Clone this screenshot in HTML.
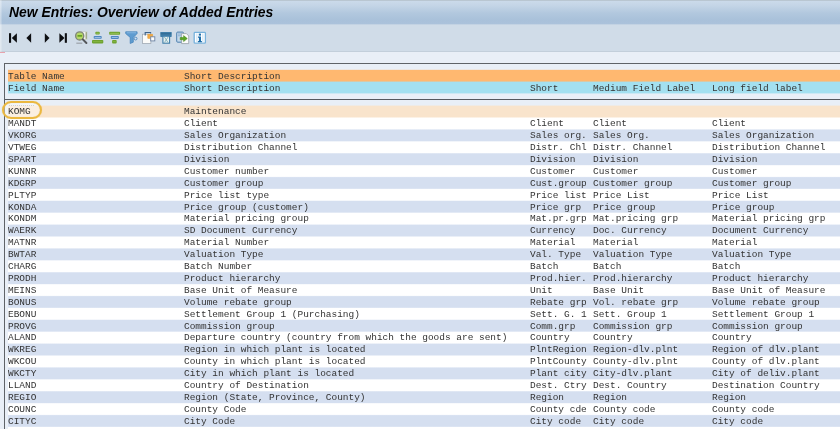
<!DOCTYPE html>
<html><head><meta charset="utf-8"><title>New Entries: Overview of Added Entries</title>
<style>
html,body{margin:0;padding:0;}
body{width:840px;height:429px;overflow:hidden;background:#e9eff7;position:relative;font-family:"Liberation Mono",monospace;}
#title{position:absolute;left:0;top:0;width:840px;height:25px;background:linear-gradient(#b9c6d1 0px,#b9c6d1 1px,#cbdaea 1px,#c3d4e6 6px,#b2c8de 13px,#a9c1da 20px,#abc2db 23.5px,#cfdbe7 25px);}
#title .t{position:absolute;left:9px;top:4px;font:italic bold 13.9px/16px "Liberation Sans",sans-serif;color:#000;white-space:nowrap;will-change:transform;}
#tb{position:absolute;left:0;top:25px;width:840px;height:27px;background:#d0dce8;border-bottom:1px solid #c3cfdb;box-sizing:border-box;}
#panel{position:absolute;left:4px;top:63px;width:900px;height:400px;border:1px solid #5f6368;background:#e9eff7;box-sizing:border-box;will-change:transform;}
.r{position:absolute;left:3px;width:900px;white-space:pre;font-size:9.46px;color:#333333;}
.c{position:absolute;top:0;}
#hl{position:absolute;left:-3px;top:37.1px;width:40px;height:18.3px;box-sizing:border-box;border:2.1px solid #ebb840;border-radius:9.2px;background:rgba(255,255,255,0.42);box-shadow:0 0 0.7px #ebb840, inset 0 0 0.7px #ebb840;}
#dots{position:absolute;left:3.6px;top:40.6px;width:25.5px;height:1px;background:repeating-linear-gradient(to right,#9fa09a 0,#9fa09a 1px,rgba(0,0,0,0) 1px,rgba(0,0,0,0) 2px);opacity:.4}
.div{position:absolute;left:0;width:900px;height:1px;background:#55595f;}
</style></head><body>
<div id="title"><div class="t">New Entries: Overview of Added Entries</div></div>
<div id="tb"></div>
<div style="position:absolute;left:0;top:0;width:2px;height:52px;background:linear-gradient(to right,rgba(255,255,255,.45),rgba(255,255,255,.1))"></div><div style="position:absolute;left:0;top:52px;width:4.5px;height:1px;background:#e8a3ad"></div>
<svg id="ico" width="220" height="28" viewBox="0 24 220 28" style="position:absolute;left:0;top:24px">
<!-- first -->
<rect x="9" y="33.2" width="2.1" height="9.6" fill="#0d0f12"/>
<path d="M11.8 38 L16.9 33.2 L16.9 42.8 Z" fill="#0d0f12"/>
<!-- prev -->
<path d="M26.4 38 L31.1 33.2 L31.1 42.8 Z" fill="#0d0f12"/>
<!-- next -->
<path d="M49.5 38 L44.8 33.2 L44.8 42.8 Z" fill="#0d0f12"/>
<!-- last -->
<path d="M64.5 38 L59.4 33.2 L59.4 42.8 Z" fill="#0d0f12"/>
<rect x="64.8" y="33.2" width="2.1" height="9.6" fill="#0d0f12"/>
<!-- find -->
<rect x="82" y="31.8" width="5" height="7.6" fill="#f4f5f1" stroke="#c2c8bd" stroke-width="0.6"/>
<rect x="85.6" y="32.1" width="1.2" height="6.8" fill="#8f9b73"/>
<circle cx="79.7" cy="35.9" r="4.05" fill="#b5d768" stroke="#81867c" stroke-width="1.4"/>
<rect x="77.5" y="35" width="4.6" height="1.7" fill="#66a024"/>
<path d="M82.8 39.4 L86.4 43" stroke="#54575a" stroke-width="2" stroke-linecap="round"/>
<rect x="76.3" y="42.7" width="6" height="0.9" fill="#8a8f94"/>
<!-- sort asc -->
<rect x="95.4" y="31.8" width="4.3" height="2.7" rx="0.8" fill="#6da22f"/>
<rect x="96.2" y="32.8" width="2.7" height="0.7" fill="#a5cc62"/>
<rect x="93.7" y="35.9" width="8" height="2.9" rx="0.8" fill="#4c86c1"/>
<rect x="94.7" y="37" width="6" height="0.7" fill="#b8d3ee"/>
<rect x="92" y="40.1" width="11.3" height="3.3" rx="0.8" fill="#6da22f"/>
<rect x="93" y="41.4" width="9.3" height="0.7" fill="#8fbd4a"/>
<!-- sort desc -->
<rect x="109.2" y="31.8" width="10.9" height="2.9" rx="0.8" fill="#6da22f"/>
<rect x="110.2" y="32.9" width="8.9" height="0.7" fill="#a5cc62"/>
<rect x="110.8" y="36" width="8" height="2.9" rx="0.8" fill="#4c86c1"/>
<rect x="111.8" y="37.1" width="6" height="0.7" fill="#b8d3ee"/>
<rect x="112.1" y="40.1" width="4.6" height="3.3" rx="0.9" fill="#6da22f"/>
<rect x="113" y="41.4" width="2.8" height="0.7" fill="#8fbd4a"/>
<!-- filter -->
<path d="M125.7 31.8 H137.1 V33.6 L133.3 37.4 V42.2 L130.2 43.5 V37.4 L125.7 33.6 Z" fill="#5f9cd0" stroke="#3f7fb8" stroke-width="0.7" stroke-linejoin="round"/>
<rect x="126.6" y="32.4" width="9.6" height="0.8" fill="#8dbde6"/>
<circle cx="135.6" cy="38.6" r="1.4" fill="#d6e3ef" stroke="#4b86bd" stroke-width="0.9"/>
<!-- copy/choose layout -->
<rect x="142.6" y="34.2" width="8.3" height="9.2" fill="#fbfbf9" stroke="#9aa3ad" stroke-width="0.7"/>
<path d="M145.2 35.6 V32.5 H150.6 V33.6" fill="none" stroke="#3d6288" stroke-width="1.1"/>
<rect x="147.8" y="34.2" width="4.9" height="4.2" fill="#f3ab45" stroke="#e39a33" stroke-width="0.5"/>
<rect x="150.7" y="36.8" width="4.1" height="4.1" fill="#fdfdfd" stroke="#6d83a3" stroke-width="0.9"/>
<!-- layout/print -->
<rect x="160.3" y="31.9" width="11.4" height="5" rx="0.6" fill="#3f7ea9"/>
<rect x="160.8" y="33.3" width="10.4" height="1" fill="#2f6890"/>
<rect x="162.9" y="36.2" width="6.7" height="7" fill="#e8f0f2" stroke="#3f7ea9" stroke-width="1.1"/>
<path d="M164.4 37 L168.1 42.6 M168.1 37 L164.4 42.6" stroke="#7fb0b8" stroke-width="0.9" fill="none"/>
<!-- export -->
<rect x="176.7" y="32.1" width="6.8" height="10.1" rx="1" fill="#c4d8ea" stroke="#4c7fae" stroke-width="1"/>
<rect x="178" y="33.6" width="4" height="0.8" fill="#7ea6cc"/>
<rect x="178" y="35.4" width="3" height="0.8" fill="#7ea6cc"/>
<path d="M181.6 33.6 H186.4 L188.7 35.9 V43.6 H181.6 Z" fill="#fbfbfb" stroke="#8d959e" stroke-width="0.7"/>
<path d="M180.2 37.5 H183.6 V35.6 L187.3 38.6 L183.6 41.6 V39.7 H180.2 Z" fill="#5aa526" stroke="#3e8414" stroke-width="0.5"/>
<!-- info -->
<rect x="194.2" y="32.4" width="11.2" height="10.8" rx="0.8" fill="#fdfeff" stroke="#78b2dc" stroke-width="1.3"/>
<rect x="196" y="33.6" width="1.6" height="8.6" fill="#dcecf8"/>
<rect x="202" y="33.6" width="1.6" height="8.6" fill="#dcecf8"/>
<rect x="198.8" y="33.6" width="2.2" height="2" fill="#1f6ea9"/>
<path d="M198 36.6 H201 V41 H201.9 V42.2 H197.9 V41 H198.9 V37.7 H198 Z" fill="#1f6ea9"/>
</svg>
<div id="panel">
<div id="bands" style="position:absolute;left:3px;top:0;width:900px;height:400px;background:linear-gradient(to bottom,#e9eff7 0px,#e9eff7 5.30px,#ffb870 6.50px,#ffb870 17.00px,#a3e0f0 18.20px,#a3e0f0 28.80px,#e9eff7 30.00px,#e9eff7 41.00px,#f9e4cc 42.20px,#f9e4cc 52.90px,#ffffff 54.10px,#ffffff 64.80px,#d5dff0 66.00px,#d5dff0 76.70px,#ffffff 77.90px,#ffffff 88.60px,#d5dff0 89.80px,#d5dff0 100.50px,#ffffff 101.70px,#ffffff 112.40px,#d5dff0 113.60px,#d5dff0 124.30px,#ffffff 125.50px,#ffffff 136.20px,#d5dff0 137.40px,#d5dff0 148.10px,#ffffff 149.30px,#ffffff 160.00px,#d5dff0 161.20px,#d5dff0 171.90px,#ffffff 173.10px,#ffffff 183.80px,#d5dff0 185.00px,#d5dff0 195.70px,#ffffff 196.90px,#ffffff 207.60px,#d5dff0 208.80px,#d5dff0 219.50px,#ffffff 220.70px,#ffffff 231.40px,#d5dff0 232.60px,#d5dff0 243.30px,#ffffff 244.50px,#ffffff 255.20px,#d5dff0 256.40px,#d5dff0 267.10px,#ffffff 268.30px,#ffffff 279.00px,#d5dff0 280.20px,#d5dff0 290.90px,#ffffff 292.10px,#ffffff 302.80px,#d5dff0 304.00px,#d5dff0 314.70px,#ffffff 315.90px,#ffffff 326.60px,#d5dff0 327.80px,#d5dff0 338.50px,#ffffff 339.70px,#ffffff 350.40px,#d5dff0 351.60px,#d5dff0 362.30px,#ffffff 363.50px,#ffffff 374.20px,#d5dff0 375.40px,#d5dff0 386.10px,#ffffff 387.30px,#ffffff 398.00px,#d5dff0 399.20px)"></div>
<div id="hl"></div><div id="dots"></div>
<div class="r" style="top:7px;height:11px;line-height:11px;"><span class="c" style="left:0px">Table Name</span><span class="c" style="left:176px">Short Description</span></div>
<div class="r" style="top:19px;height:11px;line-height:11px;"><span class="c" style="left:0px">Field Name</span><span class="c" style="left:176px">Short Description</span><span class="c" style="left:522px">Short</span><span class="c" style="left:585px">Medium Field Label</span><span class="c" style="left:704px">Long field label</span></div>
<div class="div" style="top:35px"></div>
<div class="r" style="top:42px;height:11px;line-height:11px;"><span class="c" style="left:0px">KOMG</span><span class="c" style="left:176px">Maintenance</span></div>
<div class="r" style="top:54px;height:11px;line-height:11px;"><span class="c" style="left:0px">MANDT</span><span class="c" style="left:176px">Client</span><span class="c" style="left:522px">Client</span><span class="c" style="left:585px">Client</span><span class="c" style="left:704px">Client</span></div>
<div class="r" style="top:66px;height:11px;line-height:11px;"><span class="c" style="left:0px">VKORG</span><span class="c" style="left:176px">Sales Organization</span><span class="c" style="left:522px">Sales org.</span><span class="c" style="left:585px">Sales Org.</span><span class="c" style="left:704px">Sales Organization</span></div>
<div class="r" style="top:78px;height:11px;line-height:11px;"><span class="c" style="left:0px">VTWEG</span><span class="c" style="left:176px">Distribution Channel</span><span class="c" style="left:522px">Distr. Chl</span><span class="c" style="left:585px">Distr. Channel</span><span class="c" style="left:704px">Distribution Channel</span></div>
<div class="r" style="top:90px;height:11px;line-height:11px;"><span class="c" style="left:0px">SPART</span><span class="c" style="left:176px">Division</span><span class="c" style="left:522px">Division</span><span class="c" style="left:585px">Division</span><span class="c" style="left:704px">Division</span></div>
<div class="r" style="top:102px;height:11px;line-height:11px;"><span class="c" style="left:0px">KUNNR</span><span class="c" style="left:176px">Customer number</span><span class="c" style="left:522px">Customer</span><span class="c" style="left:585px">Customer</span><span class="c" style="left:704px">Customer</span></div>
<div class="r" style="top:114px;height:11px;line-height:11px;"><span class="c" style="left:0px">KDGRP</span><span class="c" style="left:176px">Customer group</span><span class="c" style="left:522px">Cust.group</span><span class="c" style="left:585px">Customer group</span><span class="c" style="left:704px">Customer group</span></div>
<div class="r" style="top:126px;height:11px;line-height:11px;"><span class="c" style="left:0px">PLTYP</span><span class="c" style="left:176px">Price list type</span><span class="c" style="left:522px">Price list</span><span class="c" style="left:585px">Price List</span><span class="c" style="left:704px">Price List</span></div>
<div class="r" style="top:138px;height:11px;line-height:11px;"><span class="c" style="left:0px">KONDA</span><span class="c" style="left:176px">Price group (customer)</span><span class="c" style="left:522px">Price grp</span><span class="c" style="left:585px">Price group</span><span class="c" style="left:704px">Price group</span></div>
<div class="r" style="top:149px;height:11px;line-height:11px;"><span class="c" style="left:0px">KONDM</span><span class="c" style="left:176px">Material pricing group</span><span class="c" style="left:522px">Mat.pr.grp</span><span class="c" style="left:585px">Mat.pricing grp</span><span class="c" style="left:704px">Material pricing grp</span></div>
<div class="r" style="top:161px;height:11px;line-height:11px;"><span class="c" style="left:0px">WAERK</span><span class="c" style="left:176px">SD Document Currency</span><span class="c" style="left:522px">Currency</span><span class="c" style="left:585px">Doc. Currency</span><span class="c" style="left:704px">Document Currency</span></div>
<div class="r" style="top:173px;height:11px;line-height:11px;"><span class="c" style="left:0px">MATNR</span><span class="c" style="left:176px">Material Number</span><span class="c" style="left:522px">Material</span><span class="c" style="left:585px">Material</span><span class="c" style="left:704px">Material</span></div>
<div class="r" style="top:185px;height:11px;line-height:11px;"><span class="c" style="left:0px">BWTAR</span><span class="c" style="left:176px">Valuation Type</span><span class="c" style="left:522px">Val. Type</span><span class="c" style="left:585px">Valuation Type</span><span class="c" style="left:704px">Valuation Type</span></div>
<div class="r" style="top:197px;height:11px;line-height:11px;"><span class="c" style="left:0px">CHARG</span><span class="c" style="left:176px">Batch Number</span><span class="c" style="left:522px">Batch</span><span class="c" style="left:585px">Batch</span><span class="c" style="left:704px">Batch</span></div>
<div class="r" style="top:209px;height:11px;line-height:11px;"><span class="c" style="left:0px">PRODH</span><span class="c" style="left:176px">Product hierarchy</span><span class="c" style="left:522px">Prod.hier.</span><span class="c" style="left:585px">Prod.hierarchy</span><span class="c" style="left:704px">Product hierarchy</span></div>
<div class="r" style="top:221px;height:11px;line-height:11px;"><span class="c" style="left:0px">MEINS</span><span class="c" style="left:176px">Base Unit of Measure</span><span class="c" style="left:522px">Unit</span><span class="c" style="left:585px">Base Unit</span><span class="c" style="left:704px">Base Unit of Measure</span></div>
<div class="r" style="top:233px;height:11px;line-height:11px;"><span class="c" style="left:0px">BONUS</span><span class="c" style="left:176px">Volume rebate group</span><span class="c" style="left:522px">Rebate grp</span><span class="c" style="left:585px">Vol. rebate grp</span><span class="c" style="left:704px">Volume rebate group</span></div>
<div class="r" style="top:245px;height:11px;line-height:11px;"><span class="c" style="left:0px">EBONU</span><span class="c" style="left:176px">Settlement Group 1 (Purchasing)</span><span class="c" style="left:522px">Sett. G. 1</span><span class="c" style="left:585px">Sett. Group 1</span><span class="c" style="left:704px">Settlement Group 1</span></div>
<div class="r" style="top:257px;height:11px;line-height:11px;"><span class="c" style="left:0px">PROVG</span><span class="c" style="left:176px">Commission group</span><span class="c" style="left:522px">Comm.grp</span><span class="c" style="left:585px">Commission grp</span><span class="c" style="left:704px">Commission group</span></div>
<div class="r" style="top:268px;height:11px;line-height:11px;"><span class="c" style="left:0px">ALAND</span><span class="c" style="left:176px">Departure country (country from which the goods are sent)</span><span class="c" style="left:522px">Country</span><span class="c" style="left:585px">Country</span><span class="c" style="left:704px">Country</span></div>
<div class="r" style="top:280px;height:11px;line-height:11px;"><span class="c" style="left:0px">WKREG</span><span class="c" style="left:176px">Region in which plant is located</span><span class="c" style="left:522px">PlntRegion</span><span class="c" style="left:585px">Region-dlv.plnt</span><span class="c" style="left:704px">Region of dlv.plant</span></div>
<div class="r" style="top:292px;height:11px;line-height:11px;"><span class="c" style="left:0px">WKCOU</span><span class="c" style="left:176px">County in which plant is located</span><span class="c" style="left:522px">PlntCounty</span><span class="c" style="left:585px">County-dlv.plnt</span><span class="c" style="left:704px">County of dlv.plant</span></div>
<div class="r" style="top:304px;height:11px;line-height:11px;"><span class="c" style="left:0px">WKCTY</span><span class="c" style="left:176px">City in which plant is located</span><span class="c" style="left:522px">Plant city</span><span class="c" style="left:585px">City-dlv.plant</span><span class="c" style="left:704px">City of deliv.plant</span></div>
<div class="r" style="top:316px;height:11px;line-height:11px;"><span class="c" style="left:0px">LLAND</span><span class="c" style="left:176px">Country of Destination</span><span class="c" style="left:522px">Dest. Ctry</span><span class="c" style="left:585px">Dest. Country</span><span class="c" style="left:704px">Destination Country</span></div>
<div class="r" style="top:328px;height:11px;line-height:11px;"><span class="c" style="left:0px">REGIO</span><span class="c" style="left:176px">Region (State, Province, County)</span><span class="c" style="left:522px">Region</span><span class="c" style="left:585px">Region</span><span class="c" style="left:704px">Region</span></div>
<div class="r" style="top:340px;height:11px;line-height:11px;"><span class="c" style="left:0px">COUNC</span><span class="c" style="left:176px">County Code</span><span class="c" style="left:522px">County cde</span><span class="c" style="left:585px">County code</span><span class="c" style="left:704px">County code</span></div>
<div class="r" style="top:352px;height:11px;line-height:11px;"><span class="c" style="left:0px">CITYC</span><span class="c" style="left:176px">City Code</span><span class="c" style="left:522px">City code</span><span class="c" style="left:585px">City code</span><span class="c" style="left:704px">City code</span></div>
</div>
</body></html>
